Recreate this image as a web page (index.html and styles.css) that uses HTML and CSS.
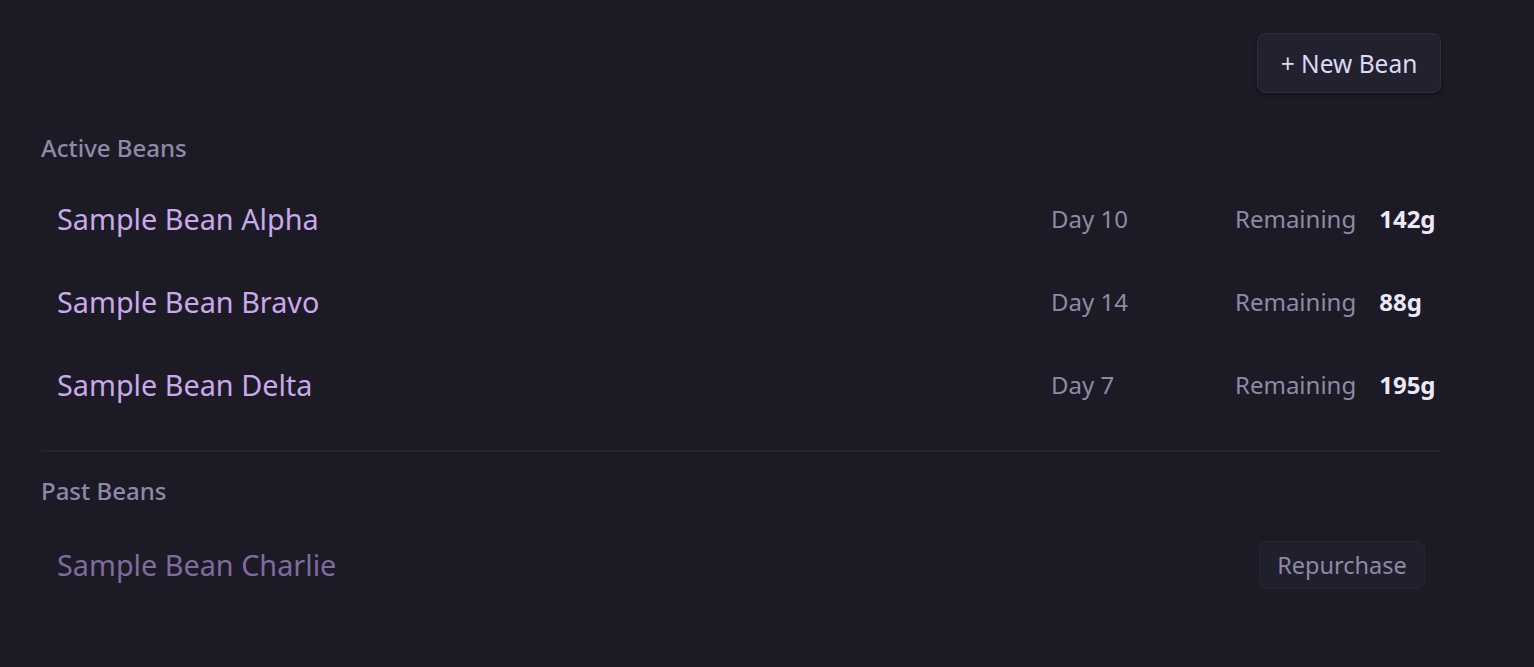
FILE: index.html
```html
<!DOCTYPE html>
<html>
<head>
<meta charset="utf-8">
<link rel="stylesheet" href="styles.css">
</head>
<body>
<main class="page">
  <div class="toolbar">
    <button class="btn-new">+ New Bean</button>
  </div>
  <section class="section active">
    <h2 class="section-title">Active Beans</h2>
    <ul class="bean-list">
      <li class="bean-row">
        <span class="bean-name">Sample Bean Alpha</span>
        <span class="bean-day">Day 10</span>
        <span class="bean-remaining"><span class="label">Remaining</span><span class="grams">142g</span></span>
      </li>
      <li class="bean-row">
        <span class="bean-name">Sample Bean Bravo</span>
        <span class="bean-day">Day 14</span>
        <span class="bean-remaining"><span class="label">Remaining</span><span class="grams">88g</span></span>
      </li>
      <li class="bean-row">
        <span class="bean-name">Sample Bean Delta</span>
        <span class="bean-day">Day 7</span>
        <span class="bean-remaining"><span class="label">Remaining</span><span class="grams">195g</span></span>
      </li>
    </ul>
  </section>
  <hr class="divider">
  <section class="section past-section">
    <h2 class="section-title">Past Beans</h2>
    <ul class="bean-list">
      <li class="bean-row past">
        <span class="bean-name">Sample Bean Charlie</span>
        <button class="btn-repurchase">Repurchase</button>
      </li>
    </ul>
  </section>
</main>
</body>
</html>
```
FILE: styles.css
```css
html, body {
  margin: 0;
  padding: 0;
  background: #1b1a25;
  height: 100%;
}
body {
  font-family: "Noto Sans", "Open Sans", sans-serif;
  color: #dcdaf0;
}
.page {
  width: 1400px;
  margin-left: 41px;
  padding-top: 33px;
}
.toolbar {
  display: flex;
  justify-content: flex-end;
}
.btn-new {
  font-family: inherit;
  font-size: 24.5px;
  color: #dddbf2;
  background: #22212e;
  border: 1px solid #302e3e;
  border-radius: 8px;
  width: 184px;
  height: 60px;
  padding: 0;
  box-shadow: 0 2px 4px rgba(0,0,0,0.3);
}
.section-title {
  margin: 0;
  font-size: 24px;
  font-weight: 500;
  color: #8e89a8;
  line-height: 32px;
}
.active .section-title {
  margin-top: 39px;
}
.active {
  padding-bottom: 24px;
}
.past-section .section-title {
  margin-top: 23px;
}
.bean-list {
  list-style: none;
  margin: 0;
  padding: 13px 0 0 0;
}
.past-section .bean-list {
  padding-top: 16px;
}
.bean-row {
  display: flex;
  align-items: center;
  height: 83px;
  padding-left: 16px;
}
.bean-name {
  font-size: 28.8px;
  color: #c9a9ea;
  flex: 1;
}
.bean-day {
  width: 184px;
  font-size: 24px;
  color: #8e8aa6;
}
.bean-remaining {
  width: 206px;
  display: flex;
  align-items: baseline;
}
.label {
  font-size: 24px;
  color: #8e8aa6;
  margin-right: 23px;
}
.grams {
  font-size: 24px;
  font-weight: 700;
  color: #ebe9f7;
}
.divider {
  border: 0;
  border-top: 2px solid #252431;
  margin: 0;
}
.past .bean-name {
  color: #7f6b9e;
}
.btn-repurchase {
  font-family: inherit;
  font-size: 23.5px;
  color: #8d89a3;
  background: #201f2c;
  border: 1px solid #262534;
  border-radius: 7px;
  width: 166px;
  height: 48px;
  padding: 0;
  margin-right: 16px;
}
```
